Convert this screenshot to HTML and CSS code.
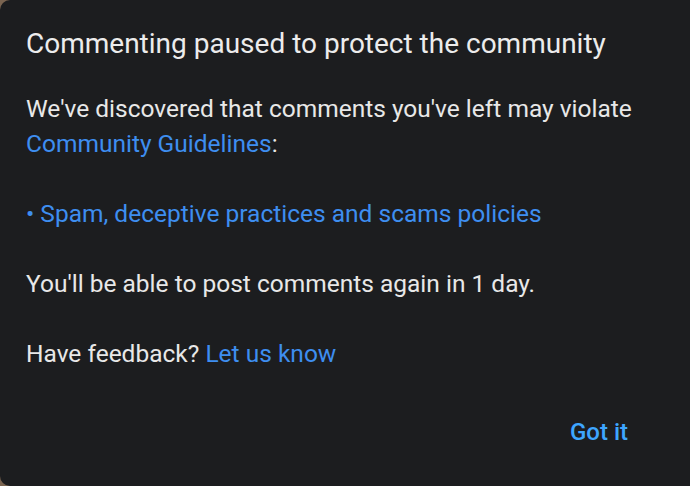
FILE: index.html
```html
<!DOCTYPE html>
<html>
<head>
<meta charset="utf-8">
<link rel="stylesheet" href="styles.css">
</head>
<body>
<div class="dialog">
  <h1 class="title">Commenting paused to protect the community</h1>
  <div class="content">
    <p>We've discovered that comments you've left may violate <a class="link">Community Guidelines</a>:</p>
    <p class="policy"><a class="link">• Spam, deceptive practices and scams policies</a></p>
    <p>You'll be able to post comments again in 1 day.</p>
    <p>Have feedback? <a class="link">Let us know</a></p>
  </div>
  <div class="actions">
    <button class="btn">Got it</button>
  </div>
</div>
</body>
</html>
```

FILE: styles.css
```css
html, body {
  margin: 0;
  padding: 0;
  background: #7a6450;
  width: 690px;
  height: 486px;
  overflow: hidden;
}
.dialog {
  box-sizing: border-box;
  width: 700px;
  height: 486px;
  background: #1c1d1f;
  border-radius: 10px 0 0 10px;
  padding: 26px 0 0 26px;
  font-family: Roboto, "Noto Sans", sans-serif;
  color: #e8e8e8;
  display: flex;
  flex-direction: column;
}
.title {
  margin: 0;
  font-size: 28px;
  font-weight: 400;
  line-height: 36px;
  color: #ececec;
}
.content {
  margin-top: 29px;
  font-size: 24.5px;
  line-height: 35px;
  width: 640px;
}
.content p {
  margin: 0 0 35px 0;
}
.content p:last-child {
  margin-bottom: 0;
}
.link {
  color: #3e8ef0;
  text-decoration: none;
}
.actions {
  display: flex;
  justify-content: flex-end;
  padding-right: 72px;
  margin-top: 46px;
}
.btn {
  background: none;
  border: none;
  font-family: Roboto, "Noto Sans", sans-serif;
  font-size: 24px;
  font-weight: 500;
  color: #3ea6ff;
  padding: 0;
  line-height: 30px;
}
```
